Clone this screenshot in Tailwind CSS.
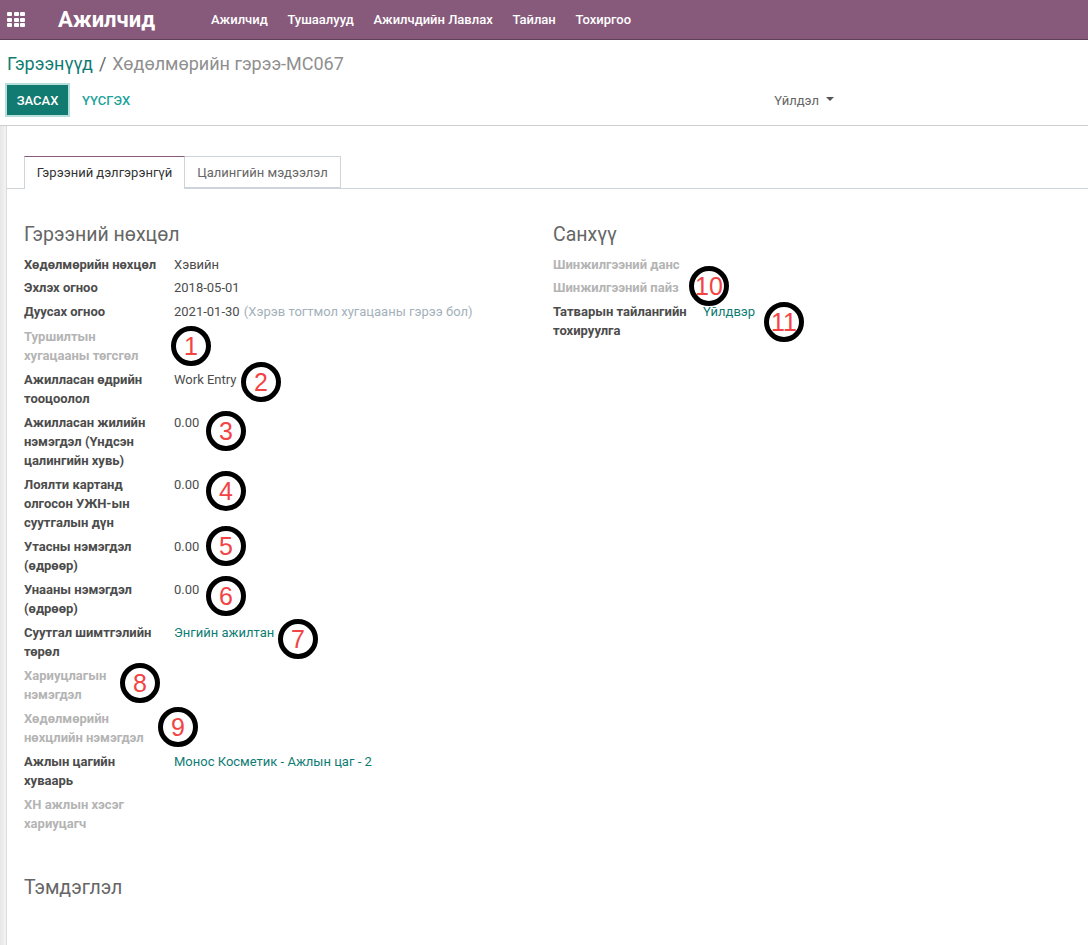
<!DOCTYPE html>
<html lang="en">
<head>
    <script src="https://cdn.jsdelivr.net/npm/@tailwindcss/browser@4"></script>
    <meta charset="UTF-8">
    <title>Хөдөлмөрийн гэрээ</title>
</head>
<body class="relative h-[945px] w-[1088px] overflow-hidden bg-white font-['Roboto','Liberation_Sans',sans-serif] text-[13px] leading-[19px] text-[#4c4c4c]">

    <!-- top bar -->
    <header class="flex h-10 items-center border-b border-[#5f3f57] bg-[#875a7b] text-white">
        <div class="ml-[7px] grid w-[18px] grid-cols-3 gap-[1.5px]">
            <i class="h-[4px] rounded-[1px] bg-white"></i><i class="h-[4px] rounded-[1px] bg-white"></i><i class="h-[4px] rounded-[1px] bg-white"></i>
            <i class="h-[4px] rounded-[1px] bg-white"></i><i class="h-[4px] rounded-[1px] bg-white"></i><i class="h-[4px] rounded-[1px] bg-white"></i>
            <i class="h-[4px] rounded-[1px] bg-white"></i><i class="h-[4px] rounded-[1px] bg-white"></i><i class="h-[4px] rounded-[1px] bg-white"></i>
        </div>
        <div class="ml-[33px] w-[153px] text-[22px] font-bold">Ажилчид</div>
        <nav class="flex gap-[19.7px] text-[13px] font-medium">
            <span>Ажилчид</span>
            <span>Тушаалууд</span>
            <span>Ажилчдийн Лавлах</span>
            <span>Тайлан</span>
            <span>Тохиргоо</span>
        </nav>
    </header>

    <!-- control panel -->
    <div class="h-[86px] border-b border-[#cfcfcf]">
        <div class="pl-[7px] pt-[12px] text-[18px] leading-[24px] text-[#8f8f8f]">
            <span class="text-[#0f7c74]">Гэрээнүүд</span> <span class="mx-[1.5px] text-[#666]">/</span> Хөдөлмөрийн гэрээ-MC067
        </div>
        <div class="mt-[9px] flex items-center pl-[7px]">
            <button class="h-[30px] w-[61px] bg-[#117a71] text-[13px] font-medium text-white ring-[2px] ring-[#b7dedb]">ЗАСАХ</button>
            <span class="ml-[14px] font-medium text-[#1ea39a]">ҮҮСГЭХ</span>
            <span class="ml-[644px] text-[#666]">Үйлдэл</span>
            <span class="ml-[7px] mb-[3px] h-0 w-0 border-x-[4px] border-t-[4px] border-x-transparent border-t-[#555]"></span>
        </div>
    </div>

    <div class="flex">
        <div class="h-[819px] w-[7px] border-r border-[#dcdcdc] bg-gradient-to-r from-[#e6e6e6] to-[#f4f4f4]"></div>
        <main class="flex-1">
            <!-- tabs -->
            <div class="mt-[30px] flex h-[33px] border-b border-[#ced4da] pl-[17px]">
                <div class="h-[33px] w-[161px] border-x border-t border-x-[#ced4da] border-t-[#875a7b] bg-white pt-[6px] text-center text-[#333]">Гэрээний дэлгэрэнгүй</div>
                <div class="h-[32px] w-[156px] border-y border-r border-[#ced4da] pt-[6px] text-center text-[#666]">Цалингийн мэдээлэл</div>
            </div>

            <div class="flex pl-[17px] pt-[32px]">
                <!-- left group -->
                <section class="w-[529px]">
                    <h2 class="mb-[6px] text-[19.5px] leading-[28px] text-[#666]">Гэрээний нөхцөл</h2>
                    <dl>
                        <div class="flex pb-[4px]"><dt class="w-[150px] font-bold">Хөдөлмөрийн нөхцөл</dt><dd>Хэвийн</dd></div>
                        <div class="flex pb-[5px]"><dt class="w-[150px] font-bold">Эхлэх огноо</dt><dd>2018-05-01</dd></div>
                        <div class="flex pb-[6px]"><dt class="w-[150px] font-bold">Дуусах огноо</dt><dd>2021-01-30 <span class="ml-[1px] text-[#a3b1ba]">(Хэрэв тогтмол хугацааны гэрээ бол)</span></dd></div>
                        <div class="flex pb-[5px]"><dt class="w-[150px] pr-[14px] font-bold text-[#b4b4b4]">Туршилтын хугацааны төгсгөл</dt></div>
                        <div class="flex pb-[5px]"><dt class="w-[150px] pr-[14px] font-bold">Ажилласан өдрийн тооцоолол</dt><dd>Work Entry</dd></div>
                        <div class="flex pb-[5px]"><dt class="w-[150px] pr-[14px] font-bold">Ажилласан жилийн нэмэгдэл (Үндсэн цалингийн хувь)</dt><dd>0.00</dd></div>
                        <div class="flex pb-[5px]"><dt class="w-[150px] pr-[14px] font-bold">Лоялти картанд олгосон УЖН-ын суутгалын дүн</dt><dd>0.00</dd></div>
                        <div class="flex pb-[5px]"><dt class="w-[150px] pr-[14px] font-bold">Утасны нэмэгдэл (өдрөөр)</dt><dd>0.00</dd></div>
                        <div class="flex pb-[5px]"><dt class="w-[150px] pr-[14px] font-bold">Унааны нэмэгдэл (өдрөөр)</dt><dd>0.00</dd></div>
                        <div class="flex pb-[5px]"><dt class="w-[150px] pr-[14px] font-bold">Суутгал шимтгэлийн төрөл</dt><dd class="text-[#0f7c74]">Энгийн ажилтан</dd></div>
                        <div class="flex pb-[5px]"><dt class="w-[150px] pr-[30px] font-bold text-[#b4b4b4]">Хариуцлагын нэмэгдэл</dt></div>
                        <div class="flex pb-[5px]"><dt class="w-[150px] pr-[4px] font-bold text-[#b4b4b4]">Хөдөлмөрийн нөхцлийн нэмэгдэл</dt></div>
                        <div class="flex pb-[5px]"><dt class="w-[150px] pr-[14px] font-bold">Ажлын цагийн хуваарь</dt><dd class="text-[#0f7c74]">Монос Косметик - Ажлын цаг - 2</dd></div>
                        <div class="flex pb-[5px]"><dt class="w-[150px] pr-[14px] font-bold text-[#b4b4b4]">ХН ажлын хэсэг хариуцагч</dt></div>
                    </dl>
                    <h2 class="mt-[36px] text-[19.5px] leading-[28px] text-[#666]">Тэмдэглэл</h2>
                </section>

                <!-- right group -->
                <section>
                    <h2 class="mb-[6px] text-[19.5px] leading-[28px] text-[#666]">Санхүү</h2>
                    <dl>
                        <div class="pb-[4px] font-bold text-[#b4b4b4]">Шинжилгээний данс</div>
                        <div class="pb-[5px] font-bold text-[#b4b4b4]">Шинжилгээний пайз</div>
                        <div class="flex pb-[5px]"><dt class="w-[150px] font-bold">Татварын тайлангийн тохируулга</dt><dd class="text-[#0f7c74]">Үйлдвэр</dd></div>
                    </dl>
                </section>
            </div>
        </main>
    </div>

    <!-- numbered annotations drawn over the screenshot -->
    <div class="absolute left-[171px] top-[326px] flex h-10 w-10 items-center justify-center rounded-full border-[5px] border-black bg-white font-['Liberation_Sans',sans-serif] text-[25px] text-[#f24444]">1</div>
    <div class="absolute left-[241px] top-[362px] flex h-10 w-10 items-center justify-center rounded-full border-[5px] border-black bg-white font-['Liberation_Sans',sans-serif] text-[25px] text-[#f24444]">2</div>
    <div class="absolute left-[206px] top-[411px] flex h-10 w-10 items-center justify-center rounded-full border-[5px] border-black bg-white font-['Liberation_Sans',sans-serif] text-[25px] text-[#f24444]">3</div>
    <div class="absolute left-[206px] top-[471px] flex h-10 w-10 items-center justify-center rounded-full border-[5px] border-black bg-white font-['Liberation_Sans',sans-serif] text-[25px] text-[#f24444]">4</div>
    <div class="absolute left-[206px] top-[526px] flex h-10 w-10 items-center justify-center rounded-full border-[5px] border-black bg-white font-['Liberation_Sans',sans-serif] text-[25px] text-[#f24444]">5</div>
    <div class="absolute left-[206px] top-[576px] flex h-10 w-10 items-center justify-center rounded-full border-[5px] border-black bg-white font-['Liberation_Sans',sans-serif] text-[25px] text-[#f24444]">6</div>
    <div class="absolute left-[278px] top-[619px] flex h-10 w-10 items-center justify-center rounded-full border-[5px] border-black bg-white font-['Liberation_Sans',sans-serif] text-[25px] text-[#f24444]">7</div>
    <div class="absolute left-[120px] top-[663px] flex h-10 w-10 items-center justify-center rounded-full border-[5px] border-black bg-white font-['Liberation_Sans',sans-serif] text-[25px] text-[#f24444]">8</div>
    <div class="absolute left-[158px] top-[707px] flex h-10 w-10 items-center justify-center rounded-full border-[5px] border-black bg-white font-['Liberation_Sans',sans-serif] text-[25px] text-[#f24444]">9</div>
    <div class="absolute left-[689px] top-[266px] flex h-10 w-10 items-center justify-center rounded-full border-[5px] border-black bg-white font-['Liberation_Sans',sans-serif] text-[25px] text-[#f24444]">10</div>
    <div class="absolute left-[764px] top-[302px] flex h-10 w-10 items-center justify-center rounded-full border-[5px] border-black bg-white font-['Liberation_Sans',sans-serif] text-[25px] text-[#f24444]">11</div>
</body>
</html>
